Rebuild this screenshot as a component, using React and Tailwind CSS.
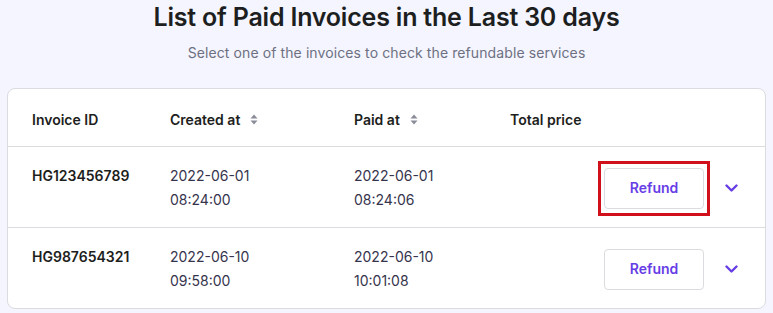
import React from "react";

const invoices = [
  {
    id: "HG123456789",
    createdDate: "2022-06-01",
    createdTime: "08:24:00",
    paidDate: "2022-06-01",
    paidTime: "08:24:06",
    highlighted: true,
  },
  {
    id: "HG987654321",
    createdDate: "2022-06-10",
    createdTime: "09:58:00",
    paidDate: "2022-06-10",
    paidTime: "10:01:08",
    highlighted: false,
  },
];

// Small up/down sort arrows next to sortable headers
function SortIcon() {
  return (
    <svg width="8" height="11" viewBox="0 0 8 11" className="ml-[10px]">
      <path d="M4 0.5 L7.5 4.5 L0.5 4.5 Z" fill="#8a8c99" />
      <path d="M4 10.5 L7.5 6.5 L0.5 6.5 Z" fill="#8a8c99" />
    </svg>
  );
}

function Chevron() {
  return (
    <svg width="13" height="9" viewBox="0 0 13 9" fill="none">
      <path
        d="M1.5 1.5 L6.5 6.5 L11.5 1.5"
        stroke="#673de6"
        strokeWidth="2.4"
        strokeLinecap="round"
        strokeLinejoin="round"
      />
    </svg>
  );
}

function RefundButton({ highlighted }) {
  return (
    <div className="relative">
      {highlighted && (
        <div className="absolute -left-[6px] -right-[6px] -top-[7px] -bottom-[7px] border-[3px] border-[#d0101b] pointer-events-none" />
      )}
      <button className="w-[100px] h-[41px] rounded-[4px] border border-[#dadce0] bg-white text-[14px] font-semibold text-[#673de6]">
        Refund
      </button>
    </div>
  );
}

function App() {
  return (
    <div
      className="w-[773px] h-[313px] bg-[#f4f5ff] overflow-hidden"
      style={{ fontFamily: "Inter, 'Noto Sans', sans-serif" }}
    >
      <div className="pt-[2px] text-center">
        <h1 className="text-[25px] leading-[30px] font-semibold text-[#1d1e20] tracking-[-0.2px]">
          List of Paid Invoices in the Last 30 days
        </h1>
        <p className="mt-[12px] text-[14px] leading-[18px] text-[#6d7081] tracking-[0.1px]">
          Select one of the invoices to check the refundable services
        </p>
      </div>

      <div className="mx-[7px] mt-[26px] bg-white border border-[#dadce0] rounded-[8px]">
        {/* Header */}
        <div className="flex items-center h-[58px] pt-[3px] px-6 border-b border-[#dadce0] text-[14px] font-semibold text-[#1d1e20]">
          <div className="w-[138px]">Invoice ID</div>
          <div className="w-[184px] flex items-center">
            Created at
            <SortIcon />
          </div>
          <div className="w-[156px] flex items-center">
            Paid at
            <SortIcon />
          </div>
          <div>Total price</div>
        </div>

        {/* Rows */}
        {invoices.map((inv, index) => (
          <div
            key={inv.id}
            className={
              "flex items-center px-6 pt-[17px] pb-[15px] text-[14px] leading-6 text-[#36344d] " +
              (index < invoices.length - 1 ? "border-b border-[#dadce0]" : "")
            }
          >
            <div className="w-[138px] self-start font-semibold text-[#1d1e20]">{inv.id}</div>
            <div className="w-[184px]">
              <div>{inv.createdDate}</div>
              <div>{inv.createdTime}</div>
            </div>
            <div className="w-[156px]">
              <div>{inv.paidDate}</div>
              <div>{inv.paidTime}</div>
            </div>
            <div className="w-[94px]" />
            <RefundButton highlighted={inv.highlighted} />
            <div className="ml-[21px]">
              <Chevron />
            </div>
          </div>
        ))}
      </div>
    </div>
  );
}

export default App;
